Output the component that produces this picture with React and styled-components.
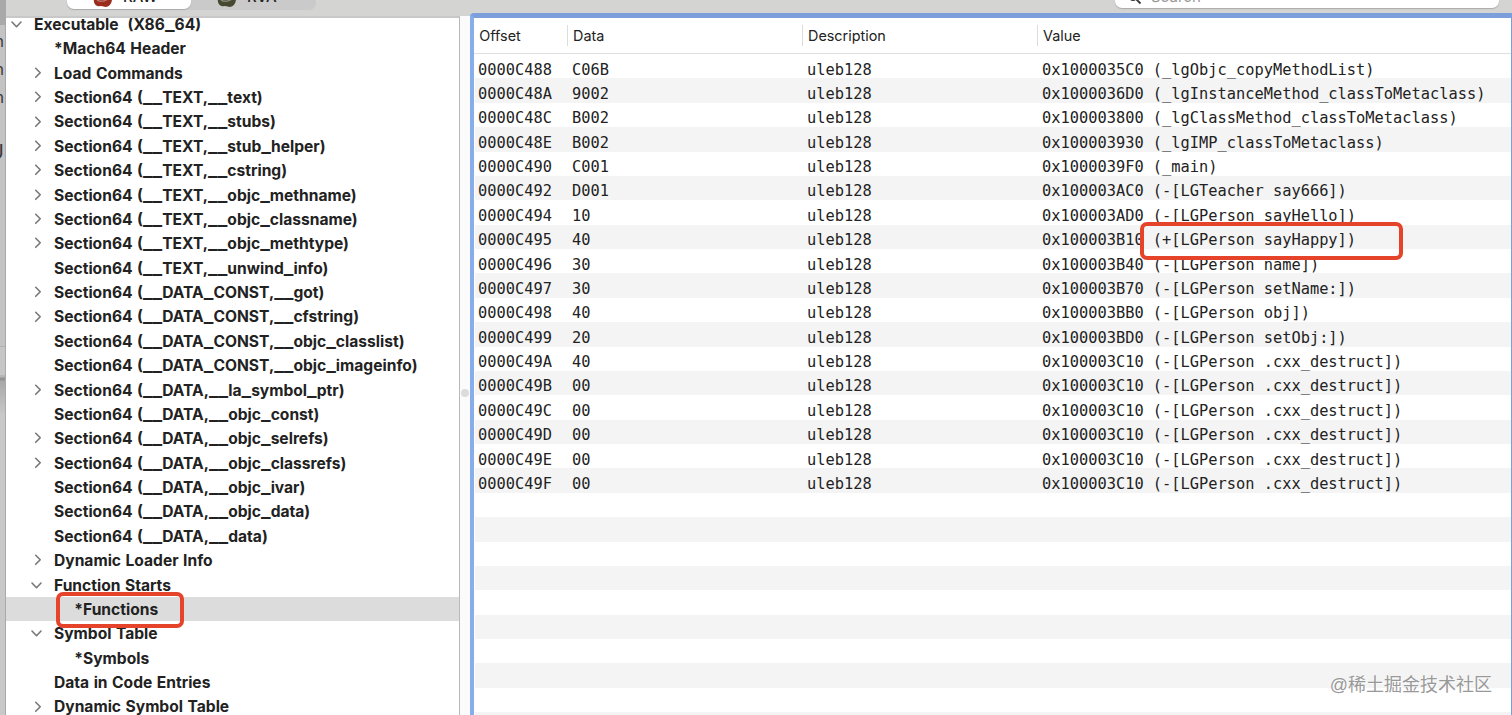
import React from "react";
import styled, { createGlobalStyle } from "styled-components";

const GlobalStyle = createGlobalStyle`
    * { box-sizing: border-box; }
    body {
        margin: 0;
        overflow: hidden;
        background: #c4c4c4;
    }
`;

const Page = styled.div`
    position: relative;
    display: flex;
    width: 1512px;
    height: 715px;
    overflow: hidden;
    font-family: Inter, "Liberation Sans", sans-serif;
    color: #222;
`;

const Behind = styled.div`
    position: relative;
    width: 6px;
    flex: none;
    overflow: hidden;
    background: linear-gradient(
        #a9a9a9 0 25px,
        #c3c3c3 25px 346px,
        #b2b2b2 346px 347px,
        #c6c6c6 347px 375px,
        #b5b5b5 375px 377px,
        #929292 378px 380px,
        #a8a8a8 381px,
        #c8c8c8 415px
    );
    border-right: 1px solid #a9a9a9;
`;

const Stray = styled.span`
    position: absolute;
    right: 1px;
    top: ${(p) => p.$top}px;
    font-size: ${(p) => p.$size || 16}px;
    line-height: 18px;
    color: #3a3a3a;
`;

const Window = styled.div`
    display: flex;
    flex-direction: column;
    flex: 1;
    min-width: 0;
`;

const Toolbar = styled.div`
    display: flex;
    justify-content: space-between;
    height: 16px;
    flex: none;
    padding: 0 13px 0 61px;
    background: #d4d4d3;
`;

const Segments = styled.div`
    display: flex;
    width: 249px;
    height: 10px;
    background: #cacaca;
    border-radius: 0 0 7px 7px;
`;

const Segment = styled.div`
    display: flex;
    align-items: flex-end;
    gap: 9px;
    height: 9px;
    width: 124px;
    padding-left: 25px;
    overflow: hidden;
    border-radius: 0 0 7px 7px;
    background: ${(p) => (p.$on ? "#fff" : "transparent")};
    box-shadow: ${(p) => (p.$on ? "0 1px 1px #aaa" : "none")};
    svg { flex: none; margin-bottom: 1px; }
`;

const SegmentLabel = styled.span`
    font-size: 15px;
    line-height: 18px;
    margin-bottom: 3px;
    font-weight: 500;
`;

const Search = styled.div`
    display: flex;
    align-items: flex-end;
    gap: 9px;
    width: 384px;
    height: 8px;
    padding-left: 13px;
    overflow: hidden;
    background: #fff;
    border-radius: 0 0 7px 7px;
    box-shadow: 0 1px 1px #aaa;
    font-size: 15px;
    line-height: 18px;
    color: #999;
    svg { flex: none; margin-bottom: 3px; }
`;

const SearchLabel = styled.span`
    margin-bottom: 2px;
`;

const Body = styled.div`
    display: flex;
    flex: 1;
    min-height: 0;
`;

const Sidebar = styled.div`
    width: 454px;
    flex: none;
    overflow: hidden;
    background: #fff;
    border-top: 2px solid #c8c8c8;
    border-right: 1px solid #b9b9b9;
`;

const TreeList = styled.div`
    margin-top: -6.2px;
`;

const TreeRow = styled.div`
    display: flex;
    align-items: center;
    height: 24.39px;
    padding-left: ${(p) => [4, 24, 44.3][p.$level]}px;
    background: ${(p) => (p.$selected ? "#dcdcdc" : "transparent")};
`;

const Arrow = styled.span`
    display: flex;
    width: 24px;
    flex: none;
`;

const TreeLabel = styled.span`
    position: relative;
    padding-top: 1.8px;
    font-size: 15.6px;
    font-weight: 700;
    line-height: 24px;
    word-spacing: 0.8px;
    white-space: pre;
`;

const Underscores = styled.span`
    font-size: 20.8px;
    font-weight: 500;
    line-height: 0;
`;

const Divider = styled.div`
    display: flex;
    align-items: center;
    justify-content: center;
    width: 10px;
    flex: none;
    padding-top: 55px;
    background: #fbfbfb;
`;

const Grip = styled.span`
    width: 8px;
    height: 8px;
    border-radius: 50%;
    background: #dcdcdc;
`;

const Table = styled.div`
    flex: 1;
    min-width: 0;
    overflow: hidden;
    margin-top: -3px;
    background: #fff;
    border: solid #7c9fdb;
    border-width: 5px 1px 0 4px;
    border-left-color: #87aeea;
    border-top-left-radius: 4px;
`;

const columns = "93px 235px 235px 1fr";

const TableHead = styled.div`
    display: grid;
    grid-template-columns: ${columns};
    align-items: center;
    height: 36px;
    border-bottom: 1px solid #dfdfdf;
`;

const HeadCell = styled.div`
    height: 21px;
    line-height: 22px;
    padding-left: ${(p) => (p.$first ? 5.3 : 5)}px;
    font-size: 14.4px;
    border-left: ${(p) => (p.$first ? "none" : "1px solid #dcdcdc")};
`;

const TableRow = styled.div`
    display: grid;
    grid-template-columns: ${columns};
    height: 24.39px;
    margin-left: 1px;
    padding-top: 3.6px;
    background: ${(p) => (p.$odd ? "#f4f4f4" : "#fff")};
`;

const Cell = styled.div`
    position: relative;
    padding-left: ${(p) => (p.$first ? 3 : 4)}px;
    font-family: "DejaVu Sans Mono", "Liberation Mono", monospace;
    font-size: 15.35px;
    line-height: 24px;
    white-space: pre;
`;

const Mark = styled.span`
    position: absolute;
    z-index: 1;
    left: ${(p) => p.$x}px;
    top: ${(p) => p.$y}px;
    width: ${(p) => p.$w}px;
    height: ${(p) => p.$h}px;
    border: 4px solid #e5432a;
    border-radius: 7px;
`;

const Watermark = styled.div`
    position: absolute;
    right: 20px;
    bottom: 18px;
    font-family: "Liberation Sans", "Noto Sans CJK SC", sans-serif;
    font-size: 18px;
    line-height: 24px;
    color: #999;
    text-shadow: 1px 1px 0 #fff;
`;

// [level, arrow, label]
const tree = [
    [0, "down", "Executable  (X86_64)"],
    [1, "", "*Mach64 Header"],
    [1, "right", "Load Commands"],
    [1, "right", "Section64 (__TEXT,__text)"],
    [1, "right", "Section64 (__TEXT,__stubs)"],
    [1, "right", "Section64 (__TEXT,__stub_helper)"],
    [1, "right", "Section64 (__TEXT,__cstring)"],
    [1, "right", "Section64 (__TEXT,__objc_methname)"],
    [1, "right", "Section64 (__TEXT,__objc_classname)"],
    [1, "right", "Section64 (__TEXT,__objc_methtype)"],
    [1, "", "Section64 (__TEXT,__unwind_info)"],
    [1, "right", "Section64 (__DATA_CONST,__got)"],
    [1, "right", "Section64 (__DATA_CONST,__cfstring)"],
    [1, "", "Section64 (__DATA_CONST,__objc_classlist)"],
    [1, "", "Section64 (__DATA_CONST,__objc_imageinfo)"],
    [1, "right", "Section64 (__DATA,__la_symbol_ptr)"],
    [1, "", "Section64 (__DATA,__objc_const)"],
    [1, "right", "Section64 (__DATA,__objc_selrefs)"],
    [1, "right", "Section64 (__DATA,__objc_classrefs)"],
    [1, "", "Section64 (__DATA,__objc_ivar)"],
    [1, "", "Section64 (__DATA,__objc_data)"],
    [1, "", "Section64 (__DATA,__data)"],
    [1, "right", "Dynamic Loader Info"],
    [1, "down", "Function Starts"],
    [2, "", "*Functions"],
    [1, "down", "Symbol Table"],
    [2, "", "*Symbols"],
    [1, "", "Data in Code Entries"],
    [1, "right", "Dynamic Symbol Table"],
];

const rows = [
    ["0000C488", "C06B", "0x1000035C0 (_lgObjc_copyMethodList)"],
    ["0000C48A", "9002", "0x1000036D0 (_lgInstanceMethod_classToMetaclass)"],
    ["0000C48C", "B002", "0x100003800 (_lgClassMethod_classToMetaclass)"],
    ["0000C48E", "B002", "0x100003930 (_lgIMP_classToMetaclass)"],
    ["0000C490", "C001", "0x1000039F0 (_main)"],
    ["0000C492", "D001", "0x100003AC0 (-[LGTeacher say666])"],
    ["0000C494", "10", "0x100003AD0 (-[LGPerson sayHello])"],
    ["0000C495", "40", "0x100003B10 (+[LGPerson sayHappy])"],
    ["0000C496", "30", "0x100003B40 (-[LGPerson name])"],
    ["0000C497", "30", "0x100003B70 (-[LGPerson setName:])"],
    ["0000C498", "40", "0x100003BB0 (-[LGPerson obj])"],
    ["0000C499", "20", "0x100003BD0 (-[LGPerson setObj:])"],
    ["0000C49A", "40", "0x100003C10 (-[LGPerson .cxx_destruct])"],
    ["0000C49B", "00", "0x100003C10 (-[LGPerson .cxx_destruct])"],
    ["0000C49C", "00", "0x100003C10 (-[LGPerson .cxx_destruct])"],
    ["0000C49D", "00", "0x100003C10 (-[LGPerson .cxx_destruct])"],
    ["0000C49E", "00", "0x100003C10 (-[LGPerson .cxx_destruct])"],
    ["0000C49F", "00", "0x100003C10 (-[LGPerson .cxx_destruct])"],
];

// the stripes go on below the last row
const blanks = Array.from({ length: 10 }, (_, i) => rows.length + i);

// underscores are drawn a bit wider than the font has them
const wideUnderscores = (label) =>
    label.split(/(_+)/).map((part, i) => (part[0] === "_" ? <Underscores key={i}>{part}</Underscores> : part));

const Chevron = ({ dir }) => (
    <svg width="14" height="12" viewBox="0 0 14 12" fill="none" stroke="#777" strokeWidth="1.6" strokeLinecap="round" strokeLinejoin="round">
        <path d={dir === "down" ? "M2 4 L6.5 8.7 L11 4" : "M5.7 1.3 L10.2 5.8 L5.7 10.3"} />
    </svg>
);

const Gem = ({ color }) => (
    <svg width="22" height="14" viewBox="0 0 22 14">
        <path d="M1 0 H20 V6 Q19 12 14 13 L9 12 Q3 13 2 8 Z" fill={color} />
        <path d="M5 6 Q10 9 16 5" stroke="#fff" strokeOpacity="0.35" strokeWidth="1.5" fill="none" />
    </svg>
);

export default () => (
    <Page>
        <GlobalStyle />
        <Behind>
            <Stray $top={32}>n</Stray>
            <Stray $top={60}>n</Stray>
            <Stray $top={88}>m</Stray>
            <Stray $top={143} $size={20}>U</Stray>
        </Behind>
        <Window>
            <Toolbar>
                <Segments>
                    <Segment $on>
                        <Gem color="#9c2c1c" />
                        <SegmentLabel>RAW</SegmentLabel>
                    </Segment>
                    <Segment>
                        <Gem color="#46482f" />
                        <SegmentLabel>RVA</SegmentLabel>
                    </Segment>
                </Segments>
                <Search>
                    <svg width="14" height="14" viewBox="0 0 14 14" fill="none" stroke="#333" strokeWidth="1.8">
                        <circle cx="5" cy="5" r="4" />
                        <path d="M8 8 L12.5 12.5" />
                    </svg>
                    <SearchLabel>Search</SearchLabel>
                </Search>
            </Toolbar>
            <Body>
                <Sidebar>
                    <TreeList>
                        {tree.map(([level, dir, label]) => (
                            <TreeRow key={label} $level={level} $selected={label === "*Functions"}>
                                <Arrow>{dir && <Chevron dir={dir} />}</Arrow>
                                <TreeLabel>
                                    {wideUnderscores(label)}
                                    {label === "*Functions" && <Mark $x={-18.6} $y={-4.6} $w={128.5} $h={36} />}
                                </TreeLabel>
                            </TreeRow>
                        ))}
                    </TreeList>
                </Sidebar>
                <Divider>
                    <Grip />
                </Divider>
                <Table>
                    <TableHead>
                        <HeadCell $first>Offset</HeadCell>
                        <HeadCell>Data</HeadCell>
                        <HeadCell>Description</HeadCell>
                        <HeadCell>Value</HeadCell>
                    </TableHead>
                    {rows.map(([offset, data, value], i) => (
                        <TableRow key={offset} $odd={i % 2 === 1}>
                            <Cell $first>{offset}</Cell>
                            <Cell>{data}</Cell>
                            <Cell>uleb128</Cell>
                            <Cell>
                                {value}
                                {offset === "0000C495" && <Mark $x={102} $y={-6} $w={263} $h={38} />}
                            </Cell>
                        </TableRow>
                    ))}
                    {blanks.map((n) => (
                        <TableRow key={n} $odd={n % 2 === 1} />
                    ))}
                </Table>
            </Body>
        </Window>
        <Watermark>@稀土掘金技术社区</Watermark>
    </Page>
);
